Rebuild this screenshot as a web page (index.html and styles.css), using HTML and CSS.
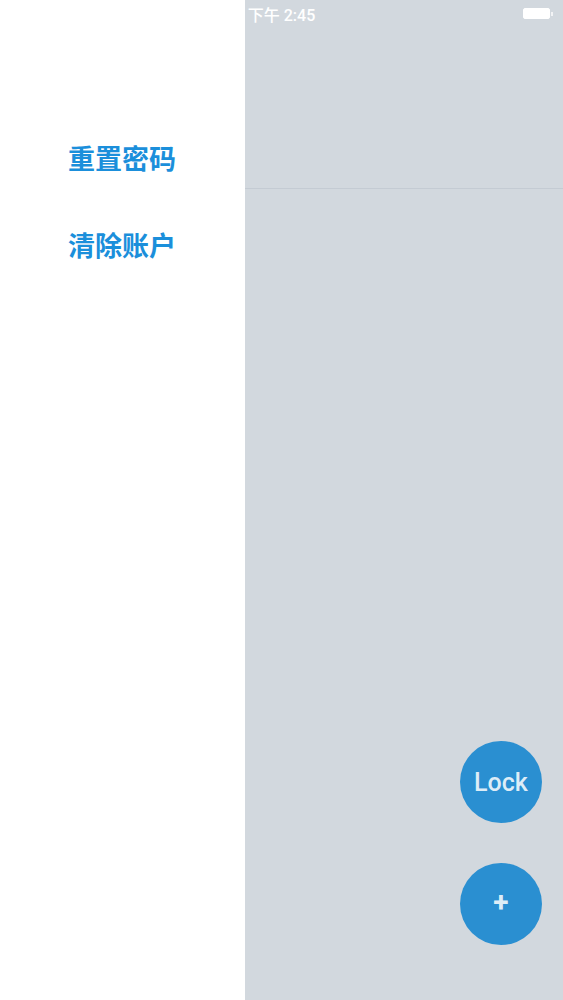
FILE: index.html
```html
<!DOCTYPE html>
<html lang="zh">
<head>
<meta charset="utf-8">
<link rel="stylesheet" href="styles.css">
</head>
<body>
<div class="screen">
  <nav class="drawer">
    <a class="menu-item">重置密码</a>
    <a class="menu-item">清除账户</a>
  </nav>
  <main class="main">
    <header class="header"></header>
    <div class="fabs">
      <button class="fab fab-lock">Lock</button>
      <button class="fab fab-add">+</button>
    </div>
  </main>
  <div class="statusbar">
    <span class="time">下午 2:45</span>
    <span class="battery"><span class="battery-body"></span><span class="battery-tip"></span></span>
  </div>
</div>
</body>
</html>
```
FILE: styles.css
```css
html, body {
  margin: 0;
  padding: 0;
}
body {
  font-family: "Liberation Sans", "Noto Sans CJK SC", sans-serif;
}
.screen {
  position: relative;
  width: 563px;
  height: 1000px;
  display: flex;
  overflow: hidden;
}
.drawer {
  width: 245px;
  flex: none;
  background: #ffffff;
  display: flex;
  flex-direction: column;
  padding: 140px 0 0 68px;
  box-sizing: border-box;
  gap: 52px;
}
.menu-item {
  font-family: "Noto Sans CJK SC", sans-serif;
  font-size: 27px;
  font-weight: 700;
  line-height: 35px;
  color: #1b8fdb;
}
.main {
  flex: 1;
  background: #d2d8de;
  display: flex;
  flex-direction: column;
}
.header {
  height: 188px;
  border-bottom: 1px solid #c4cbd3;
  flex: none;
}
.fabs {
  margin-top: auto;
  display: flex;
  flex-direction: column;
  align-items: flex-end;
  gap: 40px;
  padding: 0 21px 55px 0;
}
.fab {
  width: 82px;
  height: 82px;
  border-radius: 50%;
  border: none;
  background: #2a8fd1;
  color: rgba(255, 255, 255, 0.85);
  font-family: Roboto, "Liberation Sans", sans-serif;
  padding: 0;
  display: flex;
  align-items: center;
  justify-content: center;
}
.fab-lock {
  font-size: 25px;
  font-weight: 500;
}
.fab-add {
  font-size: 28px;
  font-weight: bold;
  padding-bottom: 3px;
}
.statusbar {
  position: absolute;
  top: 0;
  left: 0;
  right: 0;
  height: 28px;
  display: flex;
  align-items: center;
  justify-content: center;
}
.time {
  color: #ffffff;
  font-size: 16px;
  font-weight: 500;
  font-family: Roboto, "Noto Sans CJK SC", sans-serif;
}
.battery {
  position: absolute;
  right: 10px;
  top: 8px;
  display: flex;
  align-items: center;
}
.battery-body {
  width: 25px;
  height: 9px;
  background: #ffffff;
  border-radius: 2px;
  border: 1px solid #ffffff;
}
.battery-tip {
  width: 2px;
  height: 4px;
  background: rgba(255,255,255,0.7);
  margin-left: 1px;
}
```
